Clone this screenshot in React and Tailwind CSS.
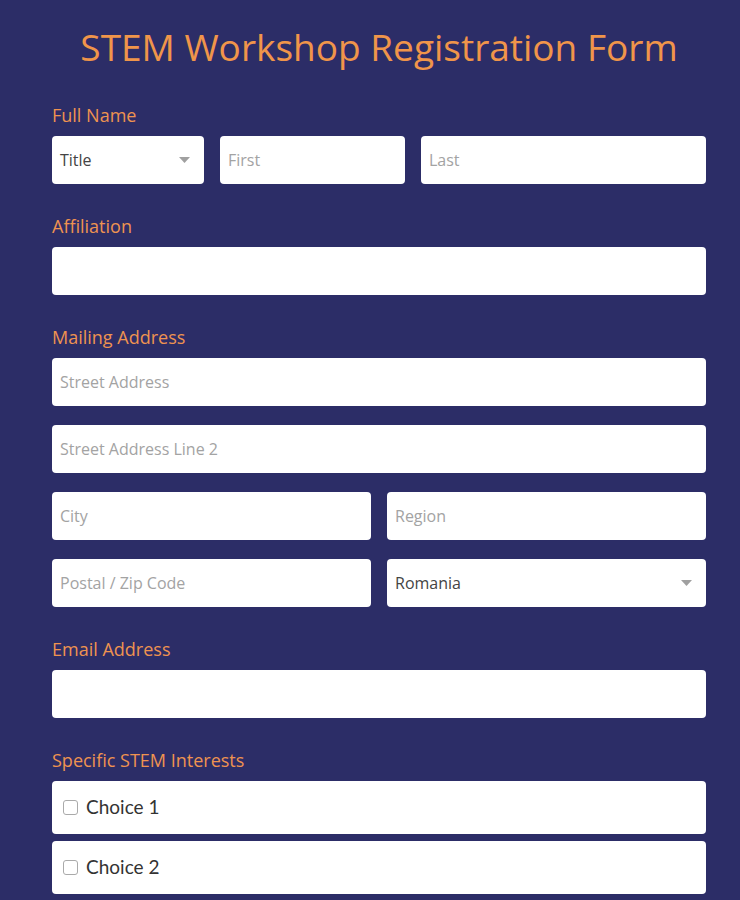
import React from "react";

const box =
  "h-12 w-full rounded bg-white px-2 text-base text-[#444] placeholder-[#a3a3a3] outline-none";

function Field({ placeholder, className = "" }) {
  return <input type="text" placeholder={placeholder} className={`${box} ${className}`} />;
}

function Select({ value, className = "" }) {
  return (
    <div className={`flex h-12 items-center justify-between rounded bg-white pl-2 pr-[14px] ${className}`}>
      <span className="text-base text-[#444]">{value}</span>
      <svg width="11" height="6" viewBox="0 0 11 6">
        <path d="M0 0h11L5.5 6z" fill="#a0a0a0" />
      </svg>
    </div>
  );
}

function Label({ children }) {
  return <p className="mb-[8px] text-[18px] font-medium leading-[26px] text-[#ef9350]">{children}</p>;
}

function Choice({ label }) {
  return (
    <label className="flex h-[53px] items-center gap-2 rounded bg-white px-[11px]">
      <span className="h-[15px] w-[15px] rounded-[3px] border border-[#aaa] bg-white" />
      <span className="text-[19px] text-[#333]" style={{ fontFamily: "Lato, sans-serif" }}>
        {label}
      </span>
    </label>
  );
}

export default function App() {
  return (
    <div
      className="min-h-screen bg-[#2c2d67] pl-[52px] pr-[34px] pt-[24px] pb-10"
      style={{ fontFamily: '"Open Sans", "Noto Sans", sans-serif' }}
    >
      <h1 className="mb-[32px] text-center text-[37px] leading-[46px] text-[#f0954a]">
        STEM Workshop Registration Form
      </h1>

      {/* Full name */}
      <section className="mb-[29px]">
        <Label>Full Name</Label>
        <div className="flex gap-4">
          <Select value="Title" className="w-[152px]" />
          <Field placeholder="First" className="!w-[185px]" />
          <Field placeholder="Last" className="flex-1" />
        </div>
      </section>

      <section className="mb-[29px]">
        <Label>Affiliation</Label>
        <Field />
      </section>

      {/* Mailing address */}
      <section className="mb-[29px]">
        <Label>Mailing Address</Label>
        <div className="flex flex-col gap-[19px]">
          <Field placeholder="Street Address" />
          <Field placeholder="Street Address Line 2" />
          <div className="grid grid-cols-2 gap-4">
            <Field placeholder="City" />
            <Field placeholder="Region" />
          </div>
          <div className="grid grid-cols-2 gap-4">
            <Field placeholder="Postal / Zip Code" />
            <Select value="Romania" />
          </div>
        </div>
      </section>

      <section className="mb-[29px]">
        <Label>Email Address</Label>
        <Field />
      </section>

      <section>
        <Label>Specific STEM Interests</Label>
        <div className="flex flex-col gap-[7px]">
          <Choice label="Choice 1" />
          <Choice label="Choice 2" />
        </div>
      </section>
    </div>
  );
}
